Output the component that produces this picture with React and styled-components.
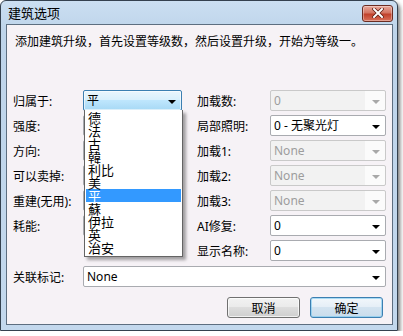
import React from 'react';
import styled, { createGlobalStyle } from 'styled-components';

const GlobalStyle = createGlobalStyle`
  html, body {
    margin: 0;
    padding: 0;
    background: #ffffff;
  }
  body {
    font-family: "Noto Sans", "Noto Sans CJK SC", sans-serif;
    font-size: 12px;
    color: #000;
  }
`;

// Outer window frame with the aero-basic look
const Window = styled.div`
  box-sizing: border-box;
  width: 398px;
  height: 331px;
  border: 1px solid #34414f;
  border-radius: 6px 6px 0 0;
  background: linear-gradient(#cbdff2, #bed4ea 30px, #c3d8ed);
  padding: 0 4px 5px 5px;
  display: flex;
  flex-direction: column;
  box-shadow: 2px 3px 4px rgba(0, 0, 0, 0.55);
`;

const TitleBar = styled.div`
  height: 23px;
  display: flex;
  align-items: center;
  justify-content: space-between;
  padding: 0 0 0 2px;
`;

const Title = styled.span`
  font-family: "Noto Sans CJK SC", sans-serif;
  font-size: 13px;
  line-height: 16px;
  margin-top: 1px;
`;

const CloseButton = styled.div`
  width: 29px;
  height: 15px;
  margin-top: 1px;
  border: 1px solid #6b2c22;
  border-radius: 3px;
  background: linear-gradient(#e9a99a, #d47462 45%, #c1412b 55%, #d9705a);
  box-shadow: inset 0 0 0 1px rgba(255, 255, 255, 0.35);
  display: flex;
  align-items: center;
  justify-content: center;
`;

const Client = styled.div`
  flex: 1;
  border: 1px solid #5d6e80;
  background: #f6f2f6;
  padding: 8px 6px 0 6px;
  display: flex;
  flex-direction: column;
`;

const Intro = styled.div`
  font-family: "Noto Sans CJK SC", sans-serif;
  font-size: 12px;
  line-height: 16px;
  padding-left: 2px;
`;

const Form = styled.div`
  margin-top: 41px;
  display: flex;
  gap: 15px;
`;

const Column = styled.div`
  display: flex;
  flex-direction: column;
  gap: 4px;
`;

const Row = styled.div`
  display: flex;
  align-items: center;
  height: 21px;
`;

const Label = styled.span`
  width: ${(p) => p.width || 70}px;
  flex-shrink: 0;
  font-size: 12px;
  line-height: 16px;
  padding-top: 2px;
`;

const Combo = styled.div`
  position: relative;
  box-sizing: border-box;
  width: ${(p) => p.width}px;
  height: 21px;
  display: flex;
  align-items: center;
  justify-content: space-between;
  padding: 0 5px 0 3px;
  border: 1px solid ${(p) => (p.focused ? '#3c7fb1' : p.disabled ? '#c9c9c9' : '#a9abb0')};
  border-radius: 2px;
  color: ${(p) => (p.disabled ? '#9d9d9d' : '#000')};
  background: ${(p) =>
    p.focused
      ? 'linear-gradient(#eaf6fd, #d9f0fc 45%, #bee6fd 50%, #a7d9f5)'
      : p.disabled
      ? 'linear-gradient(to right, #f2f2f2 calc(100% - 20px), #fbfbfb calc(100% - 20px))'
      : '#ffffff'};
  box-shadow: ${(p) => (p.focused ? 'inset 0 0 0 1px rgba(255,255,255,0.6)' : 'none')};
`;

const ComboText = styled.span`
  font-size: 12px;
  line-height: 16px;
  white-space: nowrap;
`;

const Arrow = styled.span`
  width: 0;
  height: 0;
  border-left: 4px solid transparent;
  border-right: 4px solid transparent;
  border-top: 4px solid ${(p) => (p.disabled ? '#a8a8a8' : '#000')};
  margin-top: 2px;
`;

// Open list of the owner combo box
const DropList = styled.div`
  position: absolute;
  top: 100%;
  left: 0;
  width: 99px;
  box-sizing: border-box;
  border: 1px solid #646464;
  border-top: none;
  background: #ffffff;
  box-shadow: 3px 3px 3px rgba(0, 0, 0, 0.35);
  padding: 1px 1px 2px 1px;
  z-index: 2;
`;

const DropItem = styled.div`
  height: 13px;
  line-height: 13px;
  font-family: "Noto Sans CJK SC", sans-serif;
  font-size: 13px;
  padding-left: 2px;
  background: ${(p) => (p.selected ? '#3399ff' : 'transparent')};
  color: ${(p) => (p.selected ? '#ffffff' : '#000')};
`;

const LinkRow = styled(Row)`
  margin-top: 5px;
`;

const Buttons = styled.div`
  display: flex;
  justify-content: flex-end;
  gap: 10px;
  margin-top: 10px;
  padding-right: 3px;
`;

const Button = styled.div`
  box-sizing: border-box;
  width: 73px;
  height: 21px;
  border: 1px solid ${(p) => (p.primary ? '#3c7fb1' : '#707070')};
  border-radius: 3px;
  background: ${(p) =>
    p.primary
      ? 'linear-gradient(#f2f7fb, #e6eff7 45%, #d3e3f0 50%, #c9dceb)'
      : 'linear-gradient(#f2f2f2, #ebebeb 45%, #dddddd 50%, #cfcfcf)'};
  box-shadow: inset 0 0 0 1px ${(p) => (p.primary ? 'rgba(120,200,240,0.6)' : 'rgba(255,255,255,0.7)')};
  display: flex;
  align-items: center;
  justify-content: center;
  font-family: "Noto Sans CJK SC", sans-serif;
  font-size: 12px;
`;

const owners = ['德', '法', '古', '韓', '利比', '美', '平', '蘇', '伊拉', '英', '治安'];

const leftRows = ['强度:', '方向:', '可以卖掉:', '重建(无用):', '耗能:'];

const rightRows = [
  { label: '加载数:', value: '0', disabled: true },
  { label: '局部照明:', value: '0 - 无聚光灯' },
  { label: '加载1:', value: 'None', disabled: true },
  { label: '加载2:', value: 'None', disabled: true },
  { label: '加载3:', value: 'None', disabled: true },
  { label: 'AI修复:', value: '0' },
  { label: '显示名称:', value: '0' },
];

const CloseIcon = () => (
  <svg width="12" height="10" viewBox="0 0 12 10">
    <path d="M2 1 L10 9 M10 1 L2 9" stroke="#5a1a10" strokeWidth="3.4" strokeLinecap="square" />
    <path d="M2 1 L10 9 M10 1 L2 9" stroke="#ffffff" strokeWidth="2" strokeLinecap="square" />
  </svg>
);

const App = () => {
  return (
    <>
      <GlobalStyle />
      <Window>
        <TitleBar>
          <Title>建筑选项</Title>
          <CloseButton>
            <CloseIcon />
          </CloseButton>
        </TitleBar>
        <Client>
          <Intro>添加建筑升级，首先设置等级数，然后设置升级，开始为等级一。</Intro>
          <Form>
            <Column>
              <Row>
                <Label>归属于:</Label>
                <Combo width={99} focused>
                  <ComboText>平</ComboText>
                  <Arrow />
                  <DropList>
                    {owners.map((o) => (
                      <DropItem key={o} selected={o === '平'}>
                        {o}
                      </DropItem>
                    ))}
                  </DropList>
                </Combo>
              </Row>
              {leftRows.map((l) => (
                <Row key={l}>
                  <Label>{l}</Label>
                  <Combo width={99}>
                    <ComboText />
                    <Arrow />
                  </Combo>
                </Row>
              ))}
            </Column>
            <Column>
              {rightRows.map((r) => (
                <Row key={r.label}>
                  <Label width={73}>{r.label}</Label>
                  <Combo width={116} disabled={r.disabled}>
                    <ComboText>{r.value}</ComboText>
                    <Arrow disabled={r.disabled} />
                  </Combo>
                </Row>
              ))}
            </Column>
          </Form>
          <LinkRow>
            <Label>关联标记:</Label>
            <Combo width={303}>
              <ComboText>None</ComboText>
              <Arrow />
            </Combo>
          </LinkRow>
          <Buttons>
            <Button>取消</Button>
            <Button primary>确定</Button>
          </Buttons>
        </Client>
      </Window>
    </>
  );
};

export default App;
